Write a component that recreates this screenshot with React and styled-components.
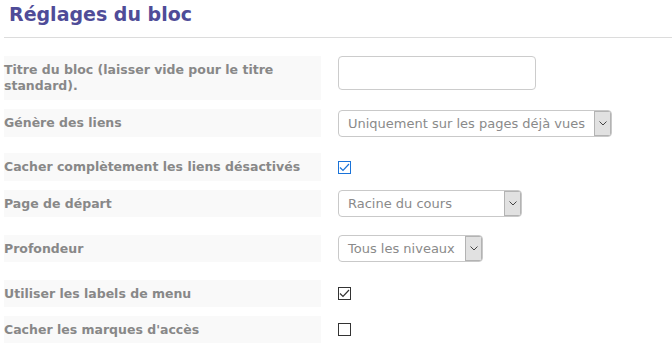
import React from "react";
import styled, { createGlobalStyle } from "styled-components";

const Global = createGlobalStyle`
  html, body { margin: 0; padding: 0; background: #fff; }
  body { font-family: "DejaVu Sans", Verdana, sans-serif; }
  * { box-sizing: border-box; }
`;

const Page = styled.div`
  padding: 0 0 0 4px;
  width: 672px;
  height: 348px;
  overflow: hidden;
`;

const Header = styled.div`
  border-bottom: 1px solid #dcdcdc;
  padding: 2px 0 11px 5px;
`;

const Title = styled.h2`
  margin: 0;
  font-size: 19px;
  line-height: 24px;
  font-weight: bold;
  color: #4f4c98;
`;

const Form = styled.div`
  display: flex;
  flex-direction: column;
`;

const Row = styled.div`
  display: flex;
  gap: 17px;
  margin-top: ${(p) => p.$mt}px;
  align-items: ${(p) => p.$align || "center"};
`;

const Label = styled.div`
  width: 317px;
  padding: ${(p) => ((p.$h || 28) - 16) / 2}px 0;
  background: #f9f9f9;
  color: #888;
  font-size: 12.5px;
  line-height: 16px;
  font-weight: bold;
`;

const TextInput = styled.input`
  width: 198px;
  height: 34px;
  border: 1px solid #ccc;
  border-radius: 4px;
  background: #fff;
  outline: none;
  margin: 0;
`;

const Select = styled.div`
  width: ${(p) => p.$w}px;
  height: 27px;
  border: 1px solid #c9c9c9;
  border-radius: 4px;
  background: #fff;
  display: flex;
  align-items: stretch;
  overflow: hidden;
`;

const SelectText = styled.span`
  flex: 1;
  padding-left: 9px;
  font-size: 13px;
  line-height: 25px;
  color: #8a8a8a;
  white-space: nowrap;
`;

const Arrow = styled.span`
  width: 17px;
  background: #e1e1e1;
  border: 1px solid #b3b3b3;
  display: flex;
  align-items: center;
  justify-content: center;
`;

const Box = styled.span`
  width: 13px;
  height: 13px;
  border: 1px solid ${(p) => p.$color};
  background: #fff;
  display: flex;
  align-items: center;
  justify-content: center;
`;

const Chevron = () => (
  <svg width="8" height="5" viewBox="0 0 8 5">
    <polyline points="0.5,0.5 4,4 7.5,0.5" fill="none" stroke="#444" strokeWidth="1" />
  </svg>
);

const Checkbox = ({ checked, color }) => (
  <Box $color={color}>
    {checked && (
      <svg width="11" height="11" viewBox="0 0 11 11">
        <polyline points="1,5.5 4,8.5 10,2" fill="none" stroke={color} strokeWidth="1.2" />
      </svg>
    )}
  </Box>
);

const Dropdown = ({ w, children }) => (
  <Select $w={w}>
    <SelectText>{children}</SelectText>
    <Arrow>
      <Chevron />
    </Arrow>
  </Select>
);

export default function App() {
  return (
    <Page>
      <Global />
      <Header>
        <Title>Réglages du bloc</Title>
      </Header>
      <Form>
        <Row $mt={18} $align="flex-start">
          <Label>Titre du bloc (laisser vide pour le titre standard).</Label>
          <TextInput type="text" />
        </Row>
        <Row $mt={9}>
          <Label>Génère des liens</Label>
          <Dropdown w={274}>Uniquement sur les pages déjà vues</Dropdown>
        </Row>
        <Row $mt={16}>
          <Label>Cacher complètement les liens désactivés</Label>
          <Checkbox checked color="#1a73d9" />
        </Row>
        <Row $mt={9}>
          <Label $h={27}>Page de départ</Label>
          <Dropdown w={184}>Racine du cours</Dropdown>
        </Row>
        <Row $mt={18}>
          <Label $h={27}>Profondeur</Label>
          <Dropdown w={145}>Tous les niveaux</Dropdown>
        </Row>
        <Row $mt={18}>
          <Label $h={27}>Utiliser les labels de menu</Label>
          <Checkbox checked color="#333" />
        </Row>
        <Row $mt={9}>
          <Label $h={27}>Cacher les marques d'accès</Label>
          <Checkbox color="#333" />
        </Row>
      </Form>
    </Page>
  );
}
